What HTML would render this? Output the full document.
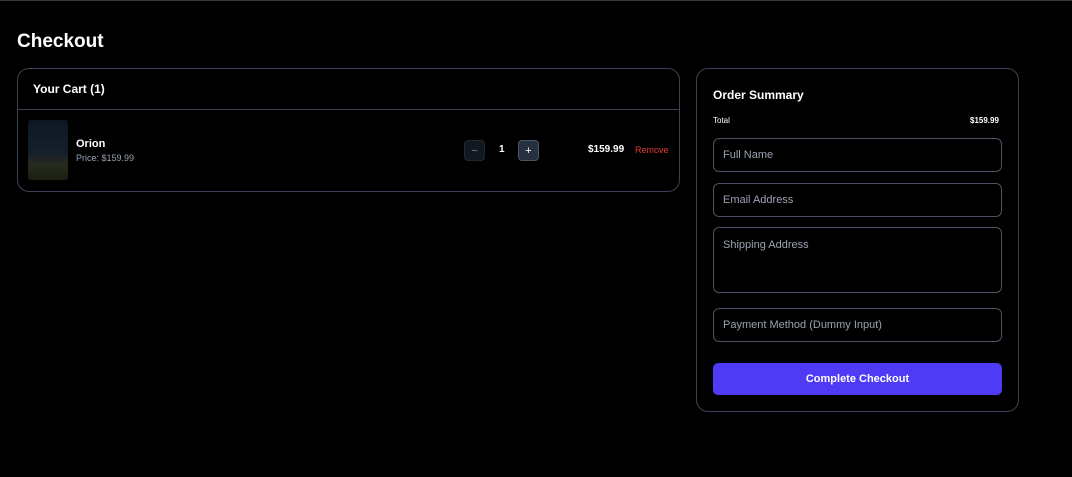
<!DOCTYPE html><html><head><style>
*{box-sizing:border-box;margin:0;padding:0}
body{width:1072px;height:477px;background:#000;color:#fff;font-family:"Liberation Sans",sans-serif;position:relative;overflow:hidden}
.a{position:absolute}
.box{border:1px solid #3b4252;border-radius:12px}
.inp{position:absolute;left:713px;width:289px;border:1px solid #4a5263;border-radius:6px;font-size:11px;color:#9aa3b2;padding:0 9px}
.btn{position:absolute;top:140px;width:21px;height:21px;border-radius:4px;font-size:11px;text-align:center;line-height:20px}
</style></head><body>
<div class="a" style="left:0;top:0;width:1072px;height:1px;background:#3a3a30"></div>
<div class="a" style="left:17px;top:31px;font-size:19px;font-weight:bold">Checkout</div>
<div class="a box" style="left:17px;top:68px;width:663px;height:124px"></div>
<div class="a" style="left:18px;top:109px;width:661px;height:1px;background:#3b4252"></div>
<div class="a" style="left:33px;top:82px;font-size:12px;font-weight:bold">Your Cart (1)</div>
<div class="a" style="left:28px;top:120px;width:40px;height:60px;border-radius:3px;background:linear-gradient(#0e1622 0%,#16202c 55%,#262b1c 75%,#1a1f12 100%)"></div>
<div class="a" style="left:76px;top:138px;font-size:11px;font-weight:bold">Orion</div>
<div class="a" style="left:76px;top:153px;font-size:9px;color:#9aa3b2">Price: $159.99</div>
<div class="btn" style="left:464px;background:#111821;border:1px solid #1f2733;color:#7a8290">−</div>
<div class="a" style="left:499px;top:144px;font-size:10px;font-weight:bold">1</div>
<div class="btn" style="left:518px;background:#253041;border:1px solid #4a5568;color:#fff">+</div>
<div class="a" style="left:588px;top:144px;font-size:10px;font-weight:bold">$159.99</div>
<div class="a" style="left:635px;top:145px;font-size:9px;color:#e53935">Remove</div>
<div class="a box" style="left:696px;top:68px;width:323px;height:344px"></div>
<div class="a" style="left:713px;top:88px;font-size:12px;font-weight:bold">Order Summary</div>
<div class="a" style="left:713px;top:116px;font-size:8px">Total</div>
<div class="a" style="left:970px;top:116px;font-size:8px;font-weight:bold">$159.99</div>
<div class="inp" style="top:138px;height:34px;line-height:33px">Full Name</div>
<div class="inp" style="top:183px;height:34px;line-height:33px">Email Address</div>
<div class="inp" style="top:227px;height:66px;padding-top:11px">Shipping Address</div>
<div class="inp" style="top:308px;height:34px;line-height:33px">Payment Method (Dummy Input)</div>
<div class="a" style="left:713px;top:363px;width:289px;height:32px;background:#4f3af5;border-radius:5px;font-size:11px;font-weight:bold;text-align:center;line-height:32px">Complete Checkout</div>
</body></html>
